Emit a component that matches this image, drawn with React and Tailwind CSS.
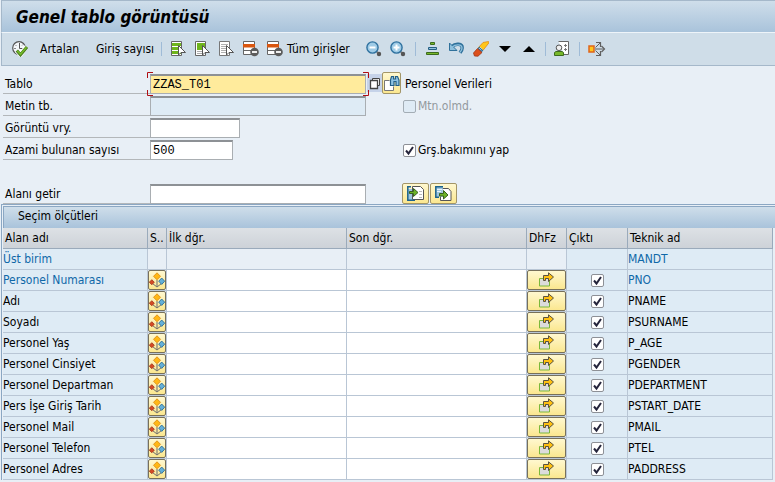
import React from "react";

function Icon({ children, w = 16, h = 16 }) {
  return (
    <svg width={w} height={h} viewBox={`0 0 ${w} ${h}`} fill="none" aria-hidden="true" className="block shrink-0">
      {children}
    </svg>
  );
}

const ExecuteIcon = () => (
  <Icon>
    <circle cx="7" cy="7" r="6.3" fill="#f4f7fa" stroke="#555" strokeWidth="1.200" />
    <path d="M7.500 2v5.500H12" stroke="#555" />
    <path d="M3.500 4l1 1M2 7.500h2M11 3.500l-1 1" stroke="#888" />
    <path d="M4.500 9.500l4 4.200 6-8" stroke="#fff" strokeWidth="4.500" />
    <path d="M4.800 9.500l3.700 4.200 6.500-7.700" stroke="#477a20" strokeWidth="3.200" />
    <path d="M5.200 9.700l3.300 3.500 6-7" stroke="#74b928" strokeWidth="1.600" />
  </Icon>
);

const Pointer = () => <path d="M7.500 4.500v9.500l2.500-2.500h4.500z" fill="#fff" stroke="#555" strokeLinejoin="miter" />;

const SelectAllIcon = () => (
  <Icon>
    <path d="M.5.500h10v14H.5z" fill="#fff" stroke="#666" />
    <path d="M1 2h9v3H1zM1 6h9v3H1zM1 10h9v3H1z" fill="#6fb51c" />
    <Pointer />
  </Icon>
);
const SelectBlockIcon = () => (
  <Icon>
    <path d="M.5.500h10v14H.5z" fill="#fff" stroke="#666" />
    <path d="M2 2h8v7H2z" fill="#6fb51c" />
    <path d="M2 10.500h5M2 12.500h5" stroke="#aaa" />
    <Pointer />
  </Icon>
);
const DeselectIcon = () => (
  <Icon>
    <path d="M.5.500h10v14H.5z" fill="#fff" stroke="#777" />
    <path d="M2 3.500h7M2 5.500h7M2 7.500h5M2 9.500h5M2 11.500h5" stroke="#b0b0b0" />
    <Pointer />
  </Icon>
);
const DeleteRowIcon = () => (
  <Icon>
    <path d="M.5.500h11v13H.5z" fill="#fff" stroke="#666" />
    <path d="M0 3h12v3.500H0z" fill="#d9560f" />
    <path d="M.5 9.500h8" stroke="#666" />
    <circle cx="11.500" cy="11" r="4.300" fill="#5c5c5c" />
    <path d="M9 11h5" stroke="#fff" strokeWidth="1.800" />
  </Icon>
);
const ZoomIcon = ({ plus }) => (
  <Icon>
    <path d="M10 10l2.500 2.500" stroke="#888" strokeWidth="2" />
    <circle cx="13" cy="13" r="2.200" fill="#555" />
    <circle cx="6.500" cy="6.500" r="5.600" fill="#9fcbe6" stroke="#2e719f" strokeWidth="1.400" />
    <path d="M3.500 6.500h6" stroke="#fff" strokeWidth="2" />
    {plus && <path d="M6.500 3.500v6" stroke="#fff" strokeWidth="2" />}
  </Icon>
);
const StackIcon = () => (
  <Icon>
    <path d="M5.500 1.500h4v2h-4z" fill="#78b82a" stroke="#3c6b1e" />
    <path d="M3.500 6.500h8v2h-8z" fill="#8fc0dd" stroke="#245f83" />
    <path d="M1.500 11.500h12v2h-12z" fill="#78b82a" stroke="#3c6b1e" />
  </Icon>
);
const UndoIcon = () => (
  <Icon>
    <path d="M3 5.500C6.500 2 13.500 2.500 13.200 7c0 2-1 3.200-2.200 4.700" stroke="#2f719b" strokeWidth="3.400" />
    <path d="M.5 2v7.500h7.500L5.500 7 3 4.500z" fill="#8fc0dd" stroke="#2f719b" />
    <path d="M3 6.200C6.500 3 12.900 3 13 7c0 1.700-.8 3-2 4.200" stroke="#8fc0dd" strokeWidth="1.400" />
  </Icon>
);
const EraserIcon = () => (
  <Icon>
    <path d="M10 1.500L15.500.5l.3 1.500-6.300 8-4.500-3z" fill="#ffc61a" stroke="#e38a12" strokeWidth=".8" />
    <path d="M6.500 5.500l4 4-1.500 2-4.500-4z" fill="#2d76a5" />
    <path d="M6 7l3.500 3.500M7 6l3.500 3.500" stroke="#fff" strokeWidth=".8" strokeDasharray="1 1" />
    <path d="M4.500 7.500L9 11.500 5 15.200 1.500 15 .5 12z" fill="#dc4f1c" stroke="#9f3515" strokeWidth=".8" />
  </Icon>
);
const DownIcon = () => (
  <Icon>
    <path d="M2 5h12L8 11z" fill="#000" />
  </Icon>
);
const UpIcon = () => (
  <Icon>
    <path d="M2 11h12L8 5z" fill="#000" />
  </Icon>
);
const UserSettingsIcon = () => (
  <Icon>
    <path d="M4.500.5h10v13H10" fill="#fff" stroke="#666" />
    <path d="M10 4.500h3M11.500 3v3M10 8.500h3M11.500 7v3" stroke="#777" />
    <circle cx="5" cy="6.800" r="2.800" fill="#f0f0f0" stroke="#555" />
    <path d="M.5 14.500v-3l1.500-1h6l1.500 1v3z" fill="#78b82a" stroke="#3c6b1e" />
  </Icon>
);
const SplitIcon = () => (
  <Icon w={18}>
    <path d="M1 5h5v6H1z" fill="#ffc61a" stroke="#e0641a" strokeWidth="1.500" />
    <path d="M7 8h9M7.500 6.500l4.500-4.500M7.500 9.500l4.500 4.500" stroke="#606060" />
    <path d="M13.500 5l3 3-3 3M8 1.500h4.500V6M8 14.500h4.500V10" stroke="#606060" strokeWidth="1.200" />
  </Icon>
);
const CopyIcon = () => (
  <Icon w={12} h={13}>
    <path d="M3.500 1.500h7v7h-7z" fill="#fff" stroke="#444" />
    <path d="M1.500 3.500h7v8h-7z" fill="#fff" stroke="#444" strokeWidth="1.300" />
  </Icon>
);
const FindIcon = () => (
  <Icon>
    <path d="M5.500 5.500h-5v10h9v-4" fill="#fff" stroke="#777" />
    <path d="M6.500 10.500V5l1-3.500h2V4h2V1.500h2l1.500 3.500v5.500h-3v-4h-2v4z" fill="#8fc4e4" stroke="#225f88" strokeWidth="1.200" />
  </Icon>
);
const GetFieldIcon = () => (
  <Icon w={17} h={15}>
    <path d="M5.500.5h8l3 3v10h-11z" fill="#fff" stroke="#555" />
    <path d="M12 5.500h3M12 8.500h3M12 11.500h3" stroke="#bbb" />
    <path d="M1 3h4v11H1z" fill="#9cc5de" />
    <path d="M4 .8H.8v13.400H8" stroke="#1c638d" strokeWidth="1.500" />
    <path d="M2.500 5.500h4v-3l4.500 4-4.500 4v-3h-4z" fill="#6cb227" stroke="#38621f" />
  </Icon>
);
const PutFieldIcon = () => (
  <Icon w={17} h={15}>
    <path d="M5.500 2.500h8l2.500 3v9H5.500z" fill="#fff" stroke="#555" />
    <path d="M.8.800h7v10h-7z" fill="#9cc5de" />
    <path d="M8 .8H.8v10.400H4" stroke="#1c638d" strokeWidth="1.500" />
    <path d="M2 3.500h5M2 5.500h4" stroke="#e8f3fa" />
    <path d="M4.500 7.500h4v-3l4.500 4.500-4.500 4v-3h-4z" fill="#6cb227" stroke="#38621f" />
  </Icon>
);
const OptionsIcon = () => (
  <Icon>
    <path d="M8 8v6M3.500 11.500L8 15l4.500-3.500" stroke="#6c6c6c" />
    <path d="M8 .8l3.500 3.500L8 7.800 4.500 4.300z" fill="#ffb816" stroke="#d9860c" strokeWidth=".8" />
    <path d="M2.800 7.700l2.500 2.500-2.500 2.500-2.500-2.500z" fill="#d44a24" stroke="#a02f16" strokeWidth=".8" />
    <path d="M12.700 6l3 3.200-3 3.200-3-3.200z" fill="#64b0d8" stroke="#1e6592" strokeWidth=".8" />
  </Icon>
);
const MoreIcon = () => (
  <Icon>
    <path d="M.5 6.500h10v7.500H.5z" fill="#dcdcdc" stroke="#7cb83a" />
    <path d="M4.500 8.500v-5h5V.8L14.500 5l-5 4.500v-3h-3v2z" fill="#ffc010" stroke="#5a5340" />
  </Icon>
);

function ToolButton({ label, children }) {
  return (
    <button type="button" aria-label={label} className="flex h-6 w-6 shrink-0 items-center justify-center">
      {children}
    </button>
  );
}

const Separator = ({ className }) => <span className={`h-3.5 w-px shrink-0 bg-[#9fbbd7] ${className}`} />;

function CheckBox({ id, label, ...props }) {
  return (
    <span className="inline-grid h-[13px] w-[13px] shrink-0">
      <input
        id={id}
        aria-label={label}
        type="checkbox"
        className="peer col-start-1 row-start-1 h-[13px] w-[13px] appearance-none rounded-xs border border-[#8d9096] bg-white disabled:border-[#a3adb5] disabled:bg-[#dfebf5]"
        {...props}
      />
      <svg
        viewBox="0 0 13 13"
        className="pointer-events-none invisible col-start-1 row-start-1 h-[13px] w-[13px] peer-checked:visible"
        fill="none"
        aria-hidden="true"
      >
        <path d="M3 6.500l2.500 3L10 3" stroke="#25253c" strokeWidth="2" />
      </svg>
    </span>
  );
}

const field =
  "h-5 border border-t-2 border-[#a9aeb2] border-t-[#8d9195] px-[2px] font-['Liberation_Mono',monospace] text-[12px] leading-4 text-black outline-none";

function FormRow({ id, label, children }) {
  return (
    <div className="flex h-[22px] items-end">
      <label htmlFor={id} className="h-5 w-[147px] shrink-0 border-b border-[#b3b7ba] pl-0.5 leading-[21px]">
        {label}
      </label>
      {children}
    </div>
  );
}

const yellow = "border border-[#a39668] bg-linear-to-b from-[#fff8cf] to-[#fbe78f]";

const rows = [
  { name: "Üst birim", tech: "MANDT", key: true, fixed: true },
  { name: "Personel Numarası", tech: "PNO", key: true },
  { name: "Adı", tech: "PNAME" },
  { name: "Soyadı", tech: "PSURNAME" },
  { name: "Personel Yaş", tech: "P_AGE" },
  { name: "Personel Cinsiyet", tech: "PGENDER" },
  { name: "Personel Departman", tech: "PDEPARTMENT" },
  { name: "Pers İşe Giriş Tarih", tech: "PSTART_DATE" },
  { name: "Personel Mail", tech: "PMAIL" },
  { name: "Personel Telefon", tech: "PTEL" },
  { name: "Personel Adres", tech: "PADDRESS" },
];

const heads = ["Alan adı", "S..", "İlk dğr.", "Son dğr.", "DhFz", "Çıktı", "Teknik ad"];
const cell = "h-[21px] border-r border-b border-[#b9c6d5] p-0";

function FieldRow({ row }) {
  const text = row.key ? "text-[#0f68a8]" : "text-black";
  const open = row.fixed ? "bg-[#e8eff6]" : "bg-white";
  return (
    <tr>
      <td className={`${cell} ${text} bg-[#deebf5]`}>{row.name}</td>
      <td className={`${cell} bg-[#e8eff6]`}>
        {!row.fixed && (
          <button type="button" aria-label={`${row.name} seçenekleri`} className="flex h-5 w-[18px] items-center justify-center rounded-xs border border-[#77705a] bg-linear-to-b from-[#fff8cf] to-[#fbe78f]">
            <OptionsIcon />
          </button>
        )}
      </td>
      {["ilk değer", "son değer"].map((kind) => (
        <td key={kind} className={`${cell} ${open}`}>
          {!row.fixed && (
            <input aria-label={`${row.name} ${kind}`} className="block h-5 w-full bg-transparent px-0.5 font-['Liberation_Mono',monospace] text-[12px] outline-none" />
          )}
        </td>
      ))}
      <td className={`${cell} bg-[#e8eff6]`}>
        {!row.fixed && (
          <button type="button" aria-label={`${row.name} daha fazla`} className="flex h-5 w-full items-center justify-center rounded-xs border border-[#77705a] bg-linear-to-b from-[#fff8cf] to-[#fbe78f]">
            <MoreIcon />
          </button>
        )}
      </td>
      <td className={`${cell} bg-[#deebf5]`}>
        {!row.fixed && (
          <div className="flex justify-center">
            <CheckBox label={`${row.name} çıktı`} defaultChecked />
          </div>
        )}
      </td>
      <td className={`${cell} ${text} bg-[#deebf5]`}>{row.tech}</td>
    </tr>
  );
}

export default function App() {
  return (
    <div className="min-h-screen bg-[#e8eff6] pl-px font-['DejaVu_Sans_Condensed','DejaVu_Sans',sans-serif] text-[12px] leading-4 text-black">
      <header className="flex h-8 items-center border-t border-l border-[#a5b8ca] bg-linear-to-b from-[#cfdeea] to-[#a9c3db] pl-3.5">
        <h1 className="text-[17px] leading-6 font-bold italic">Genel tablo görüntüsü</h1>
      </header>

      <div role="toolbar" className="flex h-[34px] items-center border-t border-b border-l border-t-[#eef4f9] border-b-[#a5b8ca] border-l-[#a5b8ca] bg-[#cfdde8] pb-px pl-1.5 whitespace-nowrap">
        <ToolButton label="Yürüt">
          <ExecuteIcon />
        </ToolButton>
        <button type="button" className="ml-2 w-14 text-left">Artalan</button>
        <button type="button" className="w-[60px] text-left">Giriş sayısı</button>
        <Separator className="mx-[5px]" />
        <ToolButton label="Tümünü seç"><SelectAllIcon /></ToolButton>
        <ToolButton label="Bloğu seç"><SelectBlockIcon /></ToolButton>
        <ToolButton label="Seçimi kaldır"><DeselectIcon /></ToolButton>
        <ToolButton label="Girişi sil"><DeleteRowIcon /></ToolButton>
        <button type="button" className="flex h-6 w-[99px] items-center gap-1 pl-1">
          <DeleteRowIcon />
          Tüm girişler
        </button>
        <ToolButton label="Uzaklaştır"><ZoomIcon /></ToolButton>
        <ToolButton label="Yakınlaştır"><ZoomIcon plus /></ToolButton>
        <Separator className="mx-[5px]" />
        <ToolButton label="Hiyerarşi"><StackIcon /></ToolButton>
        <ToolButton label="Geri al"><UndoIcon /></ToolButton>
        <ToolButton label="Temizle"><EraserIcon /></ToolButton>
        <ToolButton label="Aşağı"><DownIcon /></ToolButton>
        <ToolButton label="Yukarı"><UpIcon /></ToolButton>
        <Separator className="mx-1" />
        <ToolButton label="Kullanıcı ayarları"><UserSettingsIcon /></ToolButton>
        <Separator className="mx-[5px]" />
        <ToolButton label="Dağıt"><SplitIcon /></ToolButton>
      </div>

      <form className="pt-1.5 pl-0.5">
        <FormRow id="tablo" label="Tablo">
          <div className="relative h-5 w-[216px]">
            <input id="tablo" defaultValue="ZZAS_T01" className={`${field} w-full bg-[#ffeb9c]`} />
            <svg className="pointer-events-none absolute -top-0.5 -left-[3px]" width="222" height="24" viewBox="0 0 222 24" fill="none" aria-hidden="true">
              <path d="M.5 6V.5H6M216 .5h5.500V6M.5 18v5.500H6M216 23.500h5.500V18" stroke="#b00d12" />
            </svg>
          </div>
          <button type="button" aria-label="Çoklu seçim" className="ml-px flex h-[18px] w-[15px] items-center justify-center self-center bg-[#c6d3e9]">
            <CopyIcon />
          </button>
          <button type="button" aria-label="Bul" className={`${yellow} flex h-[22px] w-[19px] items-center justify-center rounded-xs`}>
            <FindIcon />
          </button>
          <span className="h-5 pl-1 leading-[21px]">Personel Verileri</span>
        </FormRow>
        <FormRow id="metin" label="Metin tb.">
          <input id="metin" readOnly className={`${field} w-[216px] bg-[#deebf5]`} />
          <span className="ml-[37px] flex h-5 items-center gap-0.5">
            <CheckBox id="mtn" disabled />
            <label htmlFor="mtn" className="text-[#93999e]">Mtn.olmd.</label>
          </span>
        </FormRow>
        <FormRow id="vry" label="Görüntü vry.">
          <input id="vry" className={`${field} w-[90px] bg-white`} />
        </FormRow>
        <FormRow id="azami" label="Azami bulunan sayısı">
          <input id="azami" defaultValue="500" className={`${field} w-[83px] bg-white`} />
          <span className="ml-[170px] flex h-5 items-center gap-0.5">
            <CheckBox id="grs" defaultChecked />
            <label htmlFor="grs">Grş.bakımını yap</label>
          </span>
        </FormRow>
        <div className="h-[22px]" />
        <FormRow id="alan" label="Alanı getir">
          <input id="alan" className={`${field} w-[216px] bg-white`} />
          <button type="button" aria-label="Alanı getir" className={`${yellow} ml-9 flex h-[21px] w-[27px] items-center justify-center rounded-xs`}>
            <GetFieldIcon />
          </button>
          <button type="button" aria-label="Alanı aktar" className={`${yellow} ml-px flex h-[21px] w-[27px] items-center justify-center rounded-xs`}>
            <PutFieldIcon />
          </button>
        </FormRow>
      </form>

      <section className="border-t border-l border-[#8ba7c3]">
        <h2 className="mt-px ml-px h-[22px] border-t border-l border-[#8ba7c3] bg-linear-to-b from-[#cfdeea] to-[#a9c3db] pl-3.5 leading-[19px]">
          Seçim ölçütleri
        </h2>
        <div className="pr-0.5 pl-px">
          <table className="w-full table-fixed border-separate border-spacing-0">
            <colgroup>
              <col className="w-[145px]" />
              <col className="w-[19px]" />
              <col className="w-[180px]" />
              <col className="w-[180px]" />
              <col className="w-10" />
              <col className="w-[61px]" />
              <col />
            </colgroup>
            <thead>
              <tr>
                {heads.map((h) => (
                  <th key={h} className="h-[21px] overflow-hidden border-r border-b border-[#9aaabb] bg-linear-to-b from-[#dde1e5] to-[#cdd2d8] p-0 pl-0.5 text-left font-normal whitespace-nowrap">
                    {h}
                  </th>
                ))}
              </tr>
            </thead>
            <tbody>
              {rows.map((row) => (
                <FieldRow key={row.tech} row={row} />
              ))}
            </tbody>
          </table>
        </div>
      </section>
    </div>
  );
}
